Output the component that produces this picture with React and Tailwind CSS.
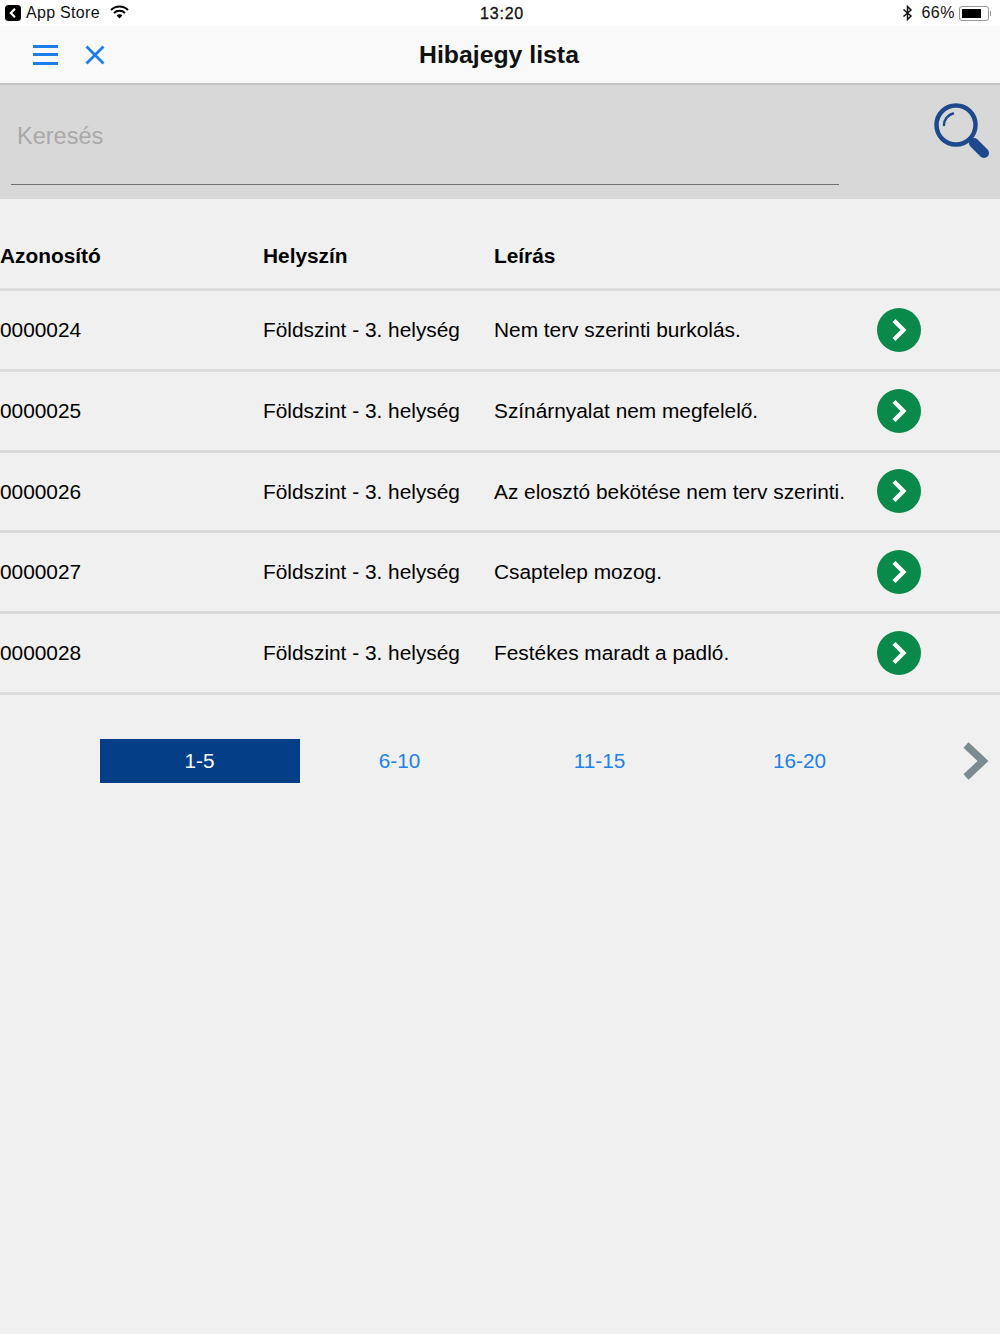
const rows = [
  { id: "0000024", place: "Földszint - 3. helység", text: "Nem terv szerinti burkolás." },
  { id: "0000025", place: "Földszint - 3. helység", text: "Színárnyalat nem megfelelő." },
  { id: "0000026", place: "Földszint - 3. helység", text: "Az elosztó bekötése nem terv szerinti." },
  { id: "0000027", place: "Földszint - 3. helység", text: "Csaptelep mozog." },
  { id: "0000028", place: "Földszint - 3. helység", text: "Festékes maradt a padló." },
];

const pages = ["1-5", "6-10", "11-15", "16-20"];

function StatusBar() {
  return (
    <div className="h-[26px] bg-white flex items-center justify-between relative text-[16px] text-[#111] tracking-[0.3px]">
      <div className="flex items-center pl-[5px]">
        <svg width="16" height="16" viewBox="0 0 16 16">
          <rect width="16" height="16" rx="3.5" fill="#000" />
          <path d="M10 3.8 5.8 8l4.2 4.2" fill="none" stroke="#fff" strokeWidth="2.2" />
        </svg>
        <span className="ml-[5px]">App Store</span>
        <svg className="ml-[10px] mb-[2px]" width="19" height="14" viewBox="0 0 19 14">
          <path d="M1 5a12 12 0 0 1 17 0" fill="none" stroke="#000" strokeWidth="2" />
          <path d="M4 8a8 8 0 0 1 11 0" fill="none" stroke="#000" strokeWidth="2" />
          <path d="M6.6 10.4a4 4 0 0 1 5.8 0L9.5 13.6z" fill="#000" />
        </svg>
      </div>
      <span className="absolute left-[480px] top-[5px] text-[16px] tracking-[0.8px] leading-[18px] [-webkit-text-stroke:0.3px_#111]">13:20</span>
      <div className="flex items-center pr-[9px]">
        <svg width="12" height="16" viewBox="0 0 12 16">
          <path d="M1.5 4.5 9 11l-3.5 3.5v-13L9 5l-7.5 6.5" fill="none" stroke="#111" strokeWidth="1.5" />
        </svg>
        <span className="ml-[7px] tracking-[0.5px]">66%</span>
        <div className="ml-[4px] w-[30px] h-[15px] border border-[#999] rounded-[3px] p-[2px]">
          <div className="w-[19px] h-full bg-black" />
        </div>
        <div className="ml-[1px] w-[1px] h-[5px] bg-[#999]" />
      </div>
    </div>
  );
}

function NavBar() {
  return (
    <div className="h-[59px] bg-[#f9f9f9] border-b-2 border-[#c4c4c4] flex items-center relative">
      <div className="ml-[33px] w-[25px] flex flex-col gap-[5.5px]">
        <div className="h-[3px] bg-[#1b7eec]" />
        <div className="h-[3px] bg-[#1b7eec]" />
        <div className="h-[3px] bg-[#1b7eec]" />
      </div>
      <svg className="ml-[27px]" width="20" height="20" viewBox="0 0 20 20">
        <path d="M1.5 1.5l17 17M18.5 1.5l-17 17" stroke="#1b7eec" strokeWidth="2.8" fill="none" />
      </svg>
      <h1 className="absolute left-0 right-[2px] top-[13px] text-center text-[24.8px] leading-[32px] font-bold text-[#111] pointer-events-none">
        Hibajegy lista
      </h1>
    </div>
  );
}

function SearchBar() {
  return (
    <div className="h-[114px] bg-[#d8d8d8] flex items-start justify-between">
      <div className="ml-[11px] mt-[17px] w-[828px] h-[83px] border-b-[1.5px] border-[#707070] pl-[6px] pt-[17px] text-[23.5px] text-[#a9a9a9]">
        Keresés
      </div>
      <svg className="mr-[8px] mt-[17px]" width="58" height="60" viewBox="0 0 58 60">
        <circle cx="22" cy="23" r="19.5" fill="none" stroke="#1d4a8c" strokeWidth="4.5" />
        <path d="M10 23a12 12 0 0 1 9-11.5" fill="none" stroke="#1d4a8c" strokeWidth="2.5" strokeLinecap="round" />
        <path d="M40 41l10 10" stroke="#1d4a8c" strokeWidth="10" strokeLinecap="round" />
      </svg>
    </div>
  );
}

function Row({ row }) {
  return (
    <div className="h-[80.75px] border-b-[3px] border-[#dcdcdc] grid grid-cols-[263px_231px_383px_44px] items-center text-[20.85px] text-black">
      <span>{row.id}</span>
      <span>{row.place}</span>
      <span className="whitespace-nowrap">{row.text}</span>
      <div className="w-[44px] h-[44px] rounded-full bg-[#0a8a4a] flex items-center justify-center">
        <svg width="18" height="26" viewBox="0 0 18 26">
          <path d="M4 3.5l9.5 9.5L4 22.5" fill="none" stroke="#fff" strokeWidth="4.2" />
        </svg>
      </div>
    </div>
  );
}

export default function App() {
  return (
    <div className="w-[1000px] h-[1334px] bg-[#f0f0f0] font-['Liberation_Sans',sans-serif]">
      <StatusBar />
      <NavBar />
      <SearchBar />
      <div className="mt-[17px] pt-[8px] h-[75px] border-b-[3px] border-[#dcdcdc] grid grid-cols-[263px_231px_1fr] items-center text-[20.85px] font-bold text-black">
        <span>Azonosító</span>
        <span>Helyszín</span>
        <span>Leírás</span>
      </div>
      {rows.map((row) => (
        <Row key={row.id} row={row} />
      ))}
      <div className="mt-[44px] pl-[99.5px] flex items-center relative">
        {pages.map((p, i) => (
          <div
            key={p}
            className={`w-[200px] h-[44px] flex items-center justify-center text-[20.7px] ${
              i === 0 ? "bg-[#033e87] text-white" : "text-[#1b82ec]"
            }`}
          >
            {p}
          </div>
        ))}
        <svg className="ml-[62px]" width="28" height="40" viewBox="0 0 28 40">
          <path d="M4 4l17 16L4 36" fill="none" stroke="#7b8b8f" strokeWidth="7.5" />
        </svg>
      </div>
    </div>
  );
}
